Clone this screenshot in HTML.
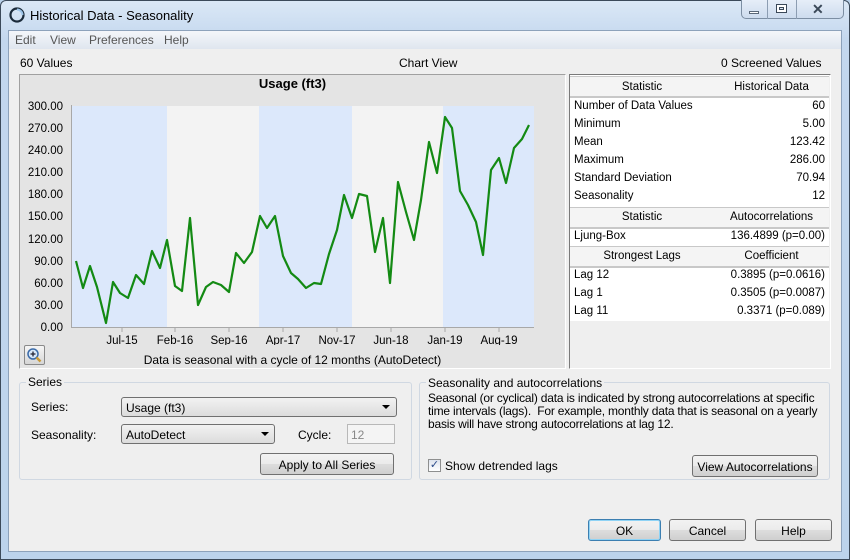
<!DOCTYPE html>
<html><head><meta charset="utf-8"><style>
*{margin:0;padding:0;box-sizing:border-box}
body{width:850px;height:560px;overflow:hidden;background:#b9d1ea;font-family:"Liberation Sans",sans-serif;font-size:12px;color:#000;position:relative}
.a{position:absolute}
.frame{left:0;top:0;width:850px;height:560px;background:linear-gradient(#dbe8f6,#c3d7ee 40px,#bcd3ec);border:1px solid #3c4a5a;border-radius:6px 6px 0 0}
.client{left:8px;top:30px;width:834px;height:522px;background:#efefef;border:1px solid #8da2bb}
.menu{left:9px;top:31px;width:832px;height:18px;background:linear-gradient(#f4f6fa,#dfe6ef);color:#555;font-size:12px}
.menu span{position:absolute;top:2px}
.btn{position:absolute;border:1px solid #707070;border-radius:3px;background:linear-gradient(#f2f2f2 0,#ebebeb 50%,#dddddd 51%,#cfcfcf);text-align:center;font-size:12px}
.tbl div{position:absolute;font-size:11.5px}
.hd{background:#f4f4f4;border-bottom:2px solid #c8c8c8;border-top:1px solid #c8c8c8}
</style></head><body>
<div class="a frame"></div>
<svg class="a" style="left:9px;top:7px" width="16" height="16" viewBox="0 0 16 16"><circle cx="8" cy="8" r="6.5" fill="none" stroke="#1a2a3a" stroke-width="2.2"/><path d="M8 2.5A5.5 5.5 0 0 1 13.5 8" stroke="#9cc4e8" stroke-width="2" fill="none"/></svg>
<div class="a" style="left:30px;top:8px;font-size:13px">Historical Data - Seasonality</div>
<div class="a" style="left:741px;top:0;width:103px;height:19px;border:1px solid #7c8ea3;border-top:none;border-radius:0 0 5px 5px;background:linear-gradient(#e6eef8,#cddcee)"></div>
<div class="a" style="left:767px;top:0;width:1px;height:19px;background:#8c9db2"></div>
<div class="a" style="left:796px;top:0;width:1px;height:19px;background:#8c9db2"></div>
<div class="a" style="left:749px;top:11px;width:10px;height:3px;border:1px solid #5a6878;background:#fff"></div>
<div class="a" style="left:776px;top:4px;width:11px;height:9px;border:1px solid #3a4858;box-shadow:inset 0 0 0 2px #fff, inset 0 0 0 3px #3a4858"></div>
<div class="a" style="left:812px;top:1px;font-size:14px;color:#3a4858;font-weight:bold">✕</div>
<div class="a client"></div>
<div class="a menu"><span style="left:6px">Edit</span><span style="left:41px">View</span><span style="left:80px">Preferences</span><span style="left:155px">Help</span></div>
<div class="a" style="left:20px;top:56px">60 Values</div>
<div class="a" style="left:399px;top:56px">Chart View</div>
<div class="a" style="left:721px;top:56px">0 Screened Values</div>
<div class="a" style="left:19px;top:74px;width:547px;height:295px;background:#e4e4e4;border:1px solid #a0a0a0;border-right-color:#fff;border-bottom-color:#fff"></div>
<div class="a" style="left:19px;top:76px;width:547px;text-align:center;font-weight:bold;font-size:13px">Usage (ft3)</div>
<svg class="a" style="left:20px;top:95px" width="545" height="250">
<g transform="translate(-20,-95)">
<rect x="72" y="106" width="462" height="221" fill="#f3f3f3"/>
<rect x="72" y="106" width="95" height="221" fill="#dce8fb"/>
<rect x="259" y="106" width="93" height="221" fill="#dce8fb"/>
<rect x="443" y="106" width="91" height="221" fill="#dce8fb"/>
<line x1="71.5" y1="105" x2="71.5" y2="327" stroke="#a8a8a8"/>
<line x1="71" y1="327.5" x2="534" y2="327.5" stroke="#a8a8a8"/>
<g stroke="#a8a8a8">
<line x1="122" y1="327" x2="122" y2="332"/><line x1="175" y1="327" x2="175" y2="332"/><line x1="229" y1="327" x2="229" y2="332"/><line x1="283" y1="327" x2="283" y2="332"/><line x1="337" y1="327" x2="337" y2="332"/><line x1="391" y1="327" x2="391" y2="332"/><line x1="445" y1="327" x2="445" y2="332"/><line x1="499" y1="327" x2="499" y2="332"/>
</g>
<g font-size="11.5" text-anchor="end" font-family="Liberation Sans">
<text x="63" y="110">300.00</text><text x="63" y="132">270.00</text><text x="63" y="154">240.00</text><text x="63" y="176">210.00</text><text x="63" y="198">180.00</text><text x="63" y="220">150.00</text><text x="63" y="243">120.00</text><text x="63" y="265">90.00</text><text x="63" y="287">60.00</text><text x="63" y="309">30.00</text><text x="63" y="331">0.00</text>
</g>
<g font-size="11.5" text-anchor="middle" font-family="Liberation Sans">
<text x="122" y="344">Jul-15</text><text x="175" y="344">Feb-16</text><text x="229" y="344">Sep-16</text><text x="283" y="344">Apr-17</text><text x="337" y="344">Nov-17</text><text x="391" y="344">Jun-18</text><text x="445" y="344">Jan-19</text><text x="499" y="344">Aug-19</text>
</g>
<polyline fill="none" stroke="#138a13" stroke-width="2.2" stroke-linejoin="round" points="76,261 83,288 90,266 97,287 106,323 113,282 120,293 128,298 136,275 144,284 152,251 160,268 167,240 175,286 182,291 190,218 198,305 206,287 213,282 221,285 229,292 236,253 244,263 252,252 260,216 267,228 275,216 283,256 291,273 298,279 306,288 314,283 321,284 329,254 337,230 344,195 352,218 359,194 367,196 375,252 383,218 390,283 398,182 406,212 414,240 421,200 429,142 437,173 445,117 452,128 460,191 468,205 476,222 483,255 491,170 499,158 506,183 514,148 522,139 529,125"/>
</g></svg>
<div class="a" style="left:24px;top:345px;width:21px;height:20px;border:1px solid #8a8a8a;border-radius:2px;background:linear-gradient(#f6f6f6,#d6d6d6)"></div>
<svg class="a" style="left:26px;top:347px" width="17" height="17"><circle cx="7" cy="7" r="5" fill="#d8e8fa" stroke="#3a6aa8" stroke-width="1.5"/><path d="M4.5 7h5M7 4.5v5" stroke="#223" stroke-width="1.3"/><path d="M10.5 10.5l4 4" stroke="#c89a3a" stroke-width="2.5"/></svg>
<div class="a" style="left:19px;top:353px;width:547px;text-align:center;font-size:12px">Data is seasonal with a cycle of 12 months (AutoDetect)</div>
<div class="a" style="left:569px;top:74px;width:262px;height:295px;border:1px solid #7a7a7a;border-right-color:#fff;border-bottom-color:#fff;background:#efefef"></div>
<div class="a tbl" style="left:570px;top:75px;width:259px;height:246px;background:#fff">
<div class="hd" style="left:0;top:1px;width:259px;height:22px"></div>
<div style="left:0;top:6px;width:144px;text-align:center">Statistic</div>
<div style="left:144px;top:6px;width:115px;text-align:center">Historical Data</div>
<div style="left:4px;top:25px">Number of Data Values</div><div style="right:4px;top:25px">60</div>
<div style="left:4px;top:43px">Minimum</div><div style="right:4px;top:43px">5.00</div>
<div style="left:4px;top:61px">Mean</div><div style="right:4px;top:61px">123.42</div>
<div style="left:4px;top:79px">Maximum</div><div style="right:4px;top:79px">286.00</div>
<div style="left:4px;top:97px">Standard Deviation</div><div style="right:4px;top:97px">70.94</div>
<div style="left:4px;top:115px">Seasonality</div><div style="right:4px;top:115px">12</div>
<div class="hd" style="left:0;top:132px;width:259px;height:22px"></div>
<div style="left:0;top:136px;width:144px;text-align:center">Statistic</div>
<div style="left:144px;top:136px;width:115px;text-align:center">Autocorrelations</div>
<div style="left:4px;top:155px">Ljung-Box</div><div style="right:4px;top:155px">136.4899 (p=0.00)</div>
<div class="hd" style="left:0;top:171px;width:259px;height:22px"></div>
<div style="left:0;top:175px;width:144px;text-align:center">Strongest Lags</div>
<div style="left:144px;top:175px;width:115px;text-align:center">Coefficient</div>
<div style="left:4px;top:194px">Lag 12</div><div style="right:4px;top:194px">0.3895 (p=0.0616)</div>
<div style="left:4px;top:212px">Lag 1</div><div style="right:4px;top:212px">0.3505 (p=0.0087)</div>
<div style="left:4px;top:230px">Lag 11</div><div style="right:4px;top:230px">0.3371 (p=0.089)</div>
</div>
<div class="a" style="left:19px;top:382px;width:393px;height:98px;border:1px solid #d0d8e2;border-radius:3px"></div>
<div class="a" style="left:26px;top:375px;background:#efefef;padding:0 2px">Series</div>
<div class="a" style="left:31px;top:400px">Series:</div>
<div class="a" style="left:121px;top:397px;width:276px;height:20px;border:1px solid #707070;border-radius:3px;background:linear-gradient(#f2f2f2,#dcdcdc);padding:3px 4px">Usage (ft3)</div>
<div class="a" style="left:382px;top:405px;border-left:4px solid transparent;border-right:4px solid transparent;border-top:4px solid #000"></div>
<div class="a" style="left:31px;top:428px">Seasonality:</div>
<div class="a" style="left:121px;top:424px;width:154px;height:20px;border:1px solid #707070;border-radius:3px;background:linear-gradient(#f2f2f2,#dcdcdc);padding:3px 4px">AutoDetect</div>
<div class="a" style="left:261px;top:432px;border-left:4px solid transparent;border-right:4px solid transparent;border-top:4px solid #000"></div>
<div class="a" style="left:298px;top:428px">Cycle:</div>
<div class="a" style="left:347px;top:424px;width:48px;height:20px;border:1px solid #b8b8b8;background:#f4f4f4;color:#888;padding:3px 3px">12</div>
<div class="btn" style="left:260px;top:453px;width:134px;height:22px;padding-top:4px">Apply to All Series</div>
<div class="a" style="left:419px;top:382px;width:411px;height:98px;border:1px solid #d0d8e2;border-radius:3px"></div>
<div class="a" style="left:426px;top:376px;background:#efefef;padding:0 2px">Seasonality and autocorrelations</div>
<div class="a" style="left:428px;top:392px;line-height:13px;white-space:nowrap;letter-spacing:-0.2px">Seasonal (or cyclical) data is indicated by strong autocorrelations at specific<br>time intervals (lags).&nbsp; For example, monthly data that is seasonal on a yearly<br>basis will have strong autocorrelations at lag 12.</div>
<div class="a" style="left:428px;top:459px;width:13px;height:13px;border:1px solid #8e8f8f;background:linear-gradient(#dde3ee,#fff);color:#2a4a8a;font-size:11px;line-height:11px;text-align:center">✓</div>
<div class="a" style="left:445px;top:459px">Show detrended lags</div>
<div class="btn" style="left:692px;top:455px;width:126px;height:22px;padding-top:4px">View Autocorrelations</div>
<div class="btn" style="left:588px;top:519px;width:73px;height:22px;padding-top:4px;border-color:#3c7fb1;box-shadow:inset 0 0 0 1px #8fd3f5">OK</div>
<div class="btn" style="left:669px;top:519px;width:77px;height:22px;padding-top:4px">Cancel</div>
<div class="btn" style="left:755px;top:519px;width:77px;height:22px;padding-top:4px">Help</div>
</body></html>
